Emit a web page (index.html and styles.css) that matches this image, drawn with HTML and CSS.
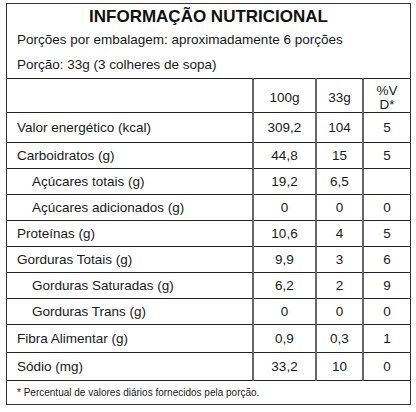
FILE: index.html
```html
<!DOCTYPE html>
<html lang="pt-BR">
<head>
<meta charset="utf-8">
<link rel="stylesheet" href="styles.css">
</head>
<body>
<div class="label">
  <div class="head">
    <h1 class="title">INFORMAÇÃO NUTRICIONAL</h1>
    <p class="info">Porções por embalagem: aproximadamente 6 porções</p>
    <p class="info">Porção: 33g (3 colheres de sopa)</p>
  </div>
  <table class="facts">
    <colgroup>
      <col class="c-name"><col class="c-100"><col class="c-33"><col class="c-vd">
    </colgroup>
    <thead>
      <tr class="r-head">
        <th></th><th>100g</th><th>33g</th><th class="vd">%V<br>D*</th>
      </tr>
    </thead>
    <tbody>
      <tr class="r-first"><td class="name">Valor energético (kcal)</td><td>309,2</td><td>104</td><td>5</td></tr>
      <tr><td class="name">Carboidratos (g)</td><td>44,8</td><td>15</td><td>5</td></tr>
      <tr><td class="name sub">Açúcares totais (g)</td><td>19,2</td><td>6,5</td><td></td></tr>
      <tr><td class="name sub">Açúcares adicionados (g)</td><td>0</td><td>0</td><td>0</td></tr>
      <tr><td class="name">Proteínas (g)</td><td>10,6</td><td>4</td><td>5</td></tr>
      <tr><td class="name">Gorduras Totais (g)</td><td>9,9</td><td>3</td><td>6</td></tr>
      <tr><td class="name sub">Gorduras Saturadas (g)</td><td>6,2</td><td>2</td><td>9</td></tr>
      <tr><td class="name sub">Gorduras Trans (g)</td><td>0</td><td>0</td><td>0</td></tr>
      <tr class="r-tall"><td class="name">Fibra Alimentar (g)</td><td>0,9</td><td>0,3</td><td>1</td></tr>
      <tr class="r-tall"><td class="name">Sódio (mg)</td><td>33,2</td><td>10</td><td>0</td></tr>
    </tbody>
    <tfoot>
      <tr class="r-foot"><td colspan="4">* Percentual de valores diários fornecidos pela porção.</td></tr>
    </tfoot>
  </table>
</div>
</body>
</html>
```
FILE: styles.css
```css
* { box-sizing: border-box; }
html, body { margin: 0; padding: 0; background: #fff; }
body {
  font-family: "Liberation Sans", Arial, sans-serif;
  color: #1a1a1a;
  padding: 3px 0 0 6px;
}
.label {
  width: 405px;
  border: 1px solid #333;
}
.head {
  display: flex;
  flex-direction: column;
  padding: 0 10px;
}
.title {
  margin: 0;
  font-size: 17px;
  font-weight: bold;
  text-align: center;
  line-height: 20px;
  padding-top: 3px;
  color: #111;
}
.info {
  margin: 0;
  font-size: 13.5px;
  line-height: 25px;
}
.info + .info { padding-bottom: 1px; }
.facts {
  width: 100%;
  border-collapse: collapse;
  table-layout: fixed;
  font-size: 13.5px;
}
.c-name { width: 246px; }
.c-100 { width: 63px; }
.c-33 { width: 47px; }
.c-vd { width: 47px; }
.facts th, .facts td {
  border-top: 1px solid #222;
  border-left: 2px solid #666;
  text-align: center;
  font-weight: normal;
  padding: 0;
  height: 26px;
}
.facts th:first-child, .facts td:first-child { border-left: 0; }
.r-head th { height: 34px; padding-top: 4px; }
.vd { line-height: 14px; }
.r-first td { height: 30px; }
.r-tall td { height: 28px; }
.facts td.name { text-align: left; padding-left: 10px; }
.facts td.sub { padding-left: 25px; }
.r-foot td {
  text-align: left;
  font-size: 10px;
  height: 23px;
  padding-left: 10px;
}
```
